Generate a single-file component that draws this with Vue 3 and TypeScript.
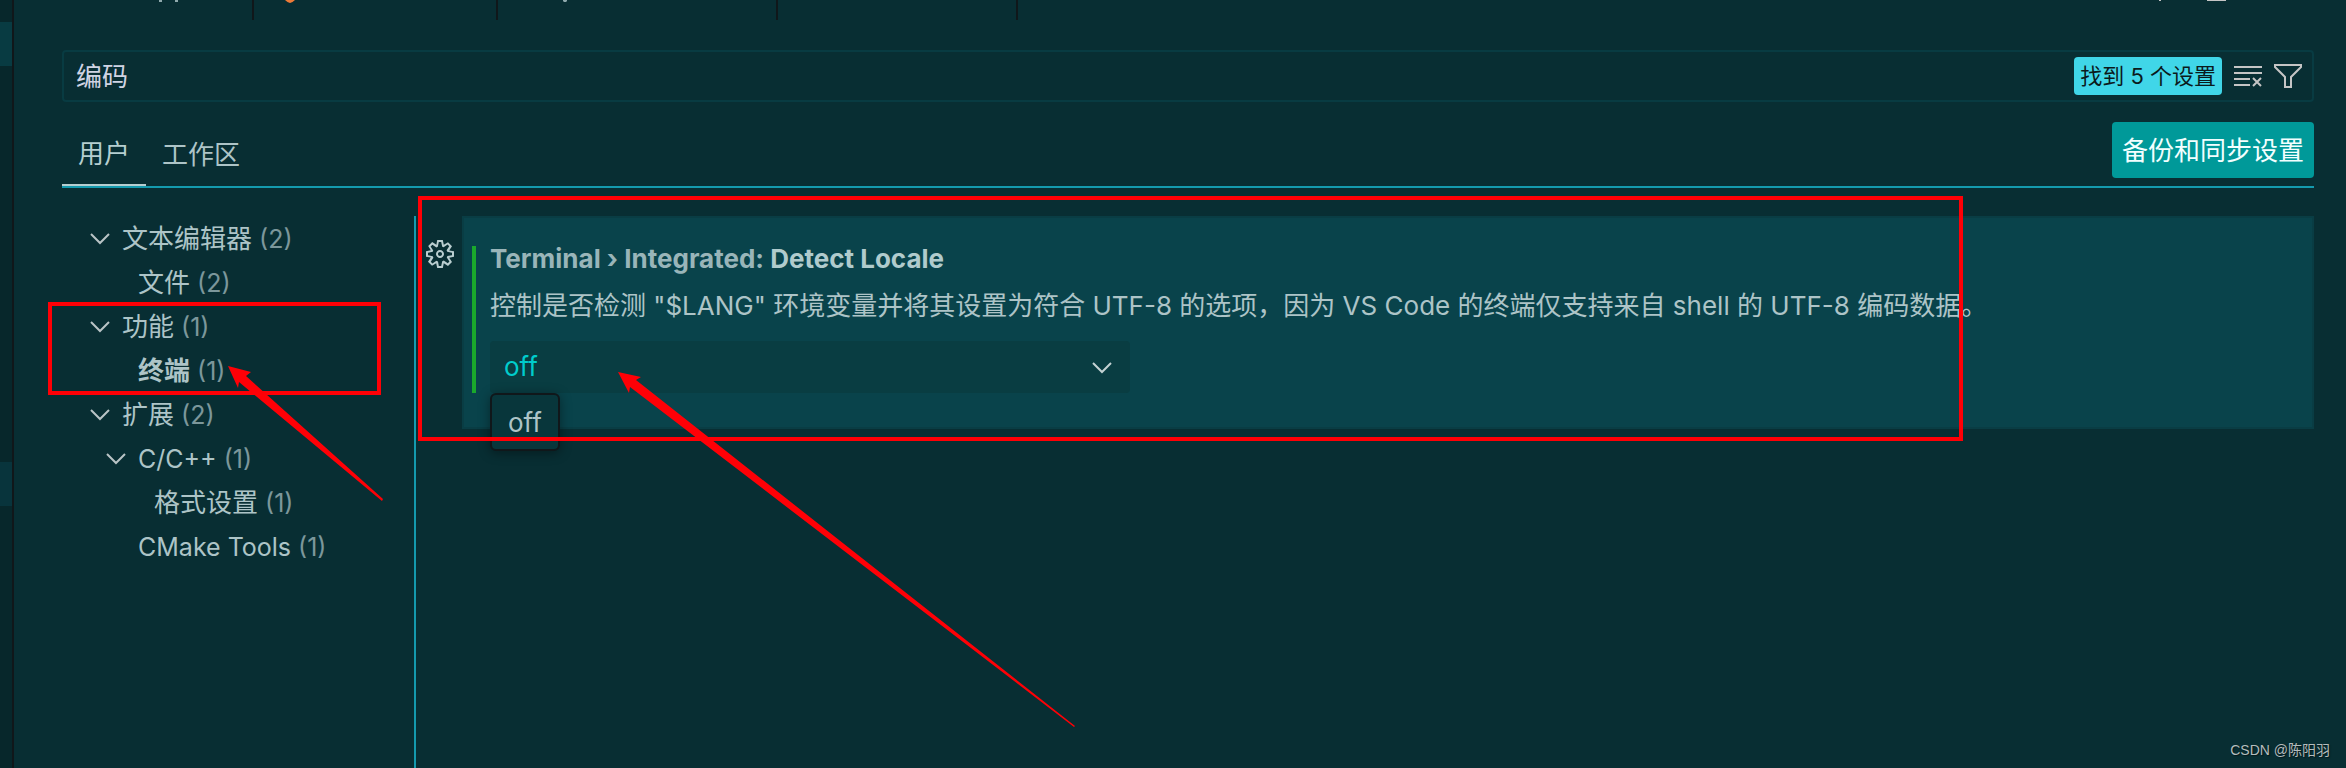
<script setup lang="ts">
import { ref } from 'vue'

interface TreeRow {
  label: string
  count: number
  level: number
  open: boolean
  current?: boolean
  latin?: boolean
}

const query = ref('编码')
const detectLocale = ref('off')

const rows: TreeRow[] = [
  { label: '文本编辑器', count: 2, level: 0, open: true },
  { label: '文件', count: 2, level: 1, open: false },
  { label: '功能', count: 1, level: 0, open: true },
  { label: '终端', count: 1, level: 1, open: false, current: true },
  { label: '扩展', count: 2, level: 0, open: true },
  { label: 'C/C++', count: 1, level: 1, open: true, latin: true },
  { label: '格式设置', count: 1, level: 2, open: false },
  { label: 'CMake Tools', count: 1, level: 1, open: false, latin: true },
]
</script>

<template>
  <div class="window">
    <aside class="explorer">
      <div class="mark selected"></div>
      <div class="mark focused"></div>
    </aside>
    <div class="editor">
      <div class="tab-strip">
        <div class="file-tab narrow">
          <svg class="peek" width="26" height="2" viewBox="0 0 26 2"><path d="M5 0h3v2H5zM21 0h3v2h-3z" fill="#8fa9ad" /></svg>
        </div>
        <div class="file-tab medium">
          <svg class="peek flame" width="10" height="3" viewBox="0 0 10 3"><path d="M0 0H10Q7 3 5 3T0 0z" fill="#ef7b38" /></svg>
        </div>
        <div class="file-tab wide">
          <svg class="peek dot" width="4" height="2" viewBox="0 0 4 2"><path d="M0 0h4v1L3 2H1L0 1z" fill="#8fa9ad" /></svg>
        </div>
        <div class="file-tab narrow"></div>
        <div class="strip-actions">
          <svg width="68" height="1" viewBox="0 0 68 1"><path d="M0 0h2v1H0zM48 0h19v1H48z" fill="#c5c5c5" /></svg>
        </div>
      </div>

      <main class="settings">
        <div class="search">
          <input v-model="query" type="text" aria-label="搜索设置" />
          <span class="badge">找到 5 个设置</span>
          <button class="icon-button" aria-label="清除搜索">
            <svg width="28" height="24" viewBox="0 0 28 24" fill="none" stroke="#c5c5c5" stroke-width="2">
              <path d="M0 3h28M0 9h28M0 15h16M0 21h16" /><path d="M19 14l8 8M27 14l-8 8" />
            </svg>
          </button>
          <button class="icon-button" aria-label="筛选">
            <svg width="28" height="24" viewBox="0 0 28 24" fill="none" stroke="#c5c5c5" stroke-width="2">
              <path d="M1 1h26v2L17 13v10h-6V13L1 3z" />
            </svg>
          </button>
        </div>

        <div class="scope-bar">
          <nav class="scopes">
            <button class="scope active">用户</button>
            <button class="scope">工作区</button>
          </nav>
          <button class="sync">备份和同步设置</button>
        </div>

        <div class="body">
          <ul class="tree">
            <li v-for="row in rows" :key="row.label">
              <button class="row" :class="['level-' + row.level, { current: row.current, latin: row.latin }]">
                <span class="twistie">
                  <svg v-if="row.open" width="20" height="12" viewBox="0 0 20 12" fill="none" stroke="#b9c4c6" stroke-width="2"><path d="M1 1l9 9 9-9" /></svg>
                </span>
                <span class="label">{{ row.label }}</span>
                <span class="count">({{ row.count }})</span>
              </button>
            </li>
          </ul>

          <div class="results">
            <button class="gear" aria-label="更多操作">
              <svg width="28" height="28" viewBox="1 1 14 14" fill="#b9cdcf" fill-rule="evenodd">
                <path d="M9.1 4.4L8.6 2H7.4l-.5 2.4-.7.3-2-1.3-.9.8 1.3 2-.2.7-2.4.5v1.2l2.4.5.3.8-1.3 2 .8.8 2-1.3.8.3.4 2.3h1.2l.5-2.4.8-.3 2 1.3.8-.8-1.3-2 .3-.8 2.3-.4V7.4l-2.4-.5-.3-.8 1.3-2-.8-.8-2 1.3-.7-.2zM9.4 1l.5 2.4L12 2.1l2 2-1.4 2.1 2.4.4v2.8l-2.4.5L14 12l-2 2-2.1-1.4-.5 2.4H6.6l-.5-2.4L4 13.9l-2-2 1.4-2.1L1 9.4V6.6l2.4-.5L2.1 4l2-2 2.1 1.4.4-2.4h2.8zm.6 7c0 1.1-.9 2-2 2s-2-.9-2-2 .9-2 2-2 2 .9 2 2zM8 9c.6 0 1-.4 1-1s-.4-1-1-1-1 .4-1 1 .4 1 1 1z" />
              </svg>
            </button>
            <section class="setting">
              <div class="modified">
                <h2><span class="category">Terminal › Integrated: </span>Detect Locale</h2>
                <p id="locale-help">控制是否检测 "$LANG" 环境变量并将其设置为符合 UTF-8 的选项，因为 VS Code 的终端仅支持来自 shell 的 UTF-8 编码数据。</p>
                <div class="select-box">
                  <select v-model="detectLocale" aria-label="Detect Locale" aria-describedby="locale-help">
                    <option>auto</option>
                    <option>off</option>
                    <option>on</option>
                  </select>
                  <svg class="arrow" width="22" height="14" viewBox="0 0 22 14" fill="none" stroke="#c3d2d3" stroke-width="2"><path d="M2 2l9 9 9-9" /></svg>
                  <div class="tooltip" role="tooltip">off</div>
                </div>
              </div>
            </section>
          </div>
        </div>
      </main>
    </div>

    <div class="frame tree-frame"></div>
    <div class="frame setting-frame"></div>
    <svg class="pointers" width="1100" height="760" viewBox="0 0 1100 760" fill="#ff0006">
      <path d="M228 366L251 372 246 376 383 499 382 501 239 382 238 388z" />
      <path d="M618 372L641 377 636 380 1075 726 1074 727 630 387 629 393z" />
    </svg>
    <div class="watermark">CSDN @陈阳羽</div>
  </div>
</template>

<style>
body {
  margin: 0;
  background: #082e33;
}
</style>

<style scoped>
.window {
  position: relative;
  display: flex;
  min-height: 100vh;
  overflow: hidden;
  background: #082e33;
  color: #adc4c7;
  font-family: Inter, "Noto Sans CJK SC", sans-serif;
  font-size: 26px;
  line-height: 44px;
}
button,
input,
select {
  margin: 0;
  padding: 0;
  border: 0;
  background: none;
  color: inherit;
  font: inherit;
}
svg {
  display: block;
}
.explorer {
  flex: none;
  width: 12px;
  padding-top: 22px;
  border-right: 2px solid #10171a;
  background: #07272b;
}
.mark {
  height: 44px;
  background: #083b42;
}
.mark.focused {
  margin-top: 396px;
  background: #08343c;
}
.editor {
  display: flex;
  flex: 1;
  flex-direction: column;
  min-width: 0;
}
.tab-strip {
  display: flex;
  height: 20px;
}
.file-tab {
  box-sizing: border-box;
  border-right: 2px solid #10171a;
}
.narrow {
  width: 240px;
}
.medium {
  width: 244px;
}
.wide {
  width: 280px;
}
.peek {
  margin-left: 140px;
}
.peek.flame {
  margin-left: 31px;
}
.peek.dot {
  margin-left: 65px;
}
.strip-actions {
  margin-left: auto;
  padding-right: 119px;
}
.settings {
  display: flex;
  flex: 1;
  flex-direction: column;
  padding: 30px 32px 0 48px;
}
.search {
  display: flex;
  align-items: center;
  gap: 12px;
  box-sizing: border-box;
  height: 52px;
  padding: 0 10px 0 12px;
  border: 2px solid #083b42;
  border-radius: 4px;
}
.search input {
  flex: 1;
  min-width: 0;
  height: 44px;
  padding-top: 2px;
  color: #d0d4e4;
  outline: 0;
}
.badge {
  padding: 0 6px;
  border-radius: 4px;
  background: #40d6e8;
  color: #0b1a1c;
  font-size: 22px;
  line-height: 38px;
}
.icon-button {
  width: 28px;
}
.scope-bar {
  display: flex;
  justify-content: space-between;
  align-items: flex-end;
  height: 84px;
  border-bottom: 2px solid #149aae;
}
.scopes {
  display: flex;
}
.scope {
  height: 62px;
  padding: 0 8px 0 16px;
}
.scope.active {
  width: 84px;
  margin-bottom: -1px;
  padding-right: 16px;
  border-bottom: 2px solid #b5ced0;
  color: #b5ced0;
}
.sync {
  height: 56px;
  margin-bottom: 8px;
  padding: 2px 10px 0;
  border-radius: 4px;
  background: #009999;
  color: #f2ffff;
}
.body {
  display: flex;
  flex: 1;
  margin-top: 28px;
}
.tree {
  box-sizing: border-box;
  flex: none;
  width: 354px;
  margin: 0;
  padding: 0 0 0 24px;
  border-right: 2px solid #149aae;
  list-style: none;
}
.row {
  display: flex;
  align-items: center;
  width: 100%;
  height: 44px;
  padding-top: 2px;
  text-align: left;
  white-space: nowrap;
}
.level-1 {
  padding-left: 16px;
}
.level-2 {
  padding-left: 32px;
}
.twistie {
  width: 32px;
  padding-left: 4px;
}
.latin .label,
.count {
  font-size: 25px;
}
.count {
  margin-left: 7px;
  opacity: 0.7;
}
.current .label {
  font-weight: 700;
}
.results {
  display: flex;
  flex: 1;
  align-items: flex-start;
  min-width: 0;
}
.gear {
  margin: 24px 8px 0 10px;
}
.setting {
  flex: 1;
  min-width: 0;
  padding: 28px 8px 34px;
  border: 2px solid #093d44;
  background: #09434b;
}
.modified {
  padding-left: 14px;
  border-left: 4px solid #1aa82c;
}
h2 {
  margin: 0;
  font-size: 26px;
  font-weight: 700;
  line-height: 26px;
  color: #b0cbcd;
}
.category {
  color: #99b5b9;
}
p {
  margin: 12px 0 13px;
  white-space: nowrap;
}
.select-box {
  position: relative;
  width: 640px;
  max-width: 100%;
}
select {
  display: block;
  width: 100%;
  height: 52px;
  padding: 0 14px;
  border-radius: 4px;
  background: #093d42;
  color: #00cccc;
  appearance: none;
}
.arrow {
  position: absolute;
  top: 20px;
  right: 17px;
}
.tooltip {
  position: absolute;
  top: 52px;
  left: 0;
  box-sizing: border-box;
  height: 58px;
  padding: 6px 16px;
  border: 2px solid #10171a;
  border-radius: 6px;
  background: #08363b;
  box-shadow: 0 2px 12px rgba(0, 0, 0, 0.4);
}
.frame {
  position: absolute;
  box-sizing: border-box;
  border: 4px solid #ff0006;
  pointer-events: none;
}
.tree-frame {
  top: 302px;
  left: 48px;
  width: 333px;
  height: 93px;
}
.setting-frame {
  top: 196px;
  left: 418px;
  width: 1545px;
  height: 245px;
}
.pointers {
  position: absolute;
  top: 0;
  left: 0;
  pointer-events: none;
}
.watermark {
  position: absolute;
  right: 16px;
  bottom: 8px;
  color: #b4bcbd;
  font-family: "Liberation Sans", "Noto Sans CJK SC", sans-serif;
  font-size: 14px;
  line-height: 20px;
  text-shadow: 1px 1px 1px #04181a;
}
</style>
